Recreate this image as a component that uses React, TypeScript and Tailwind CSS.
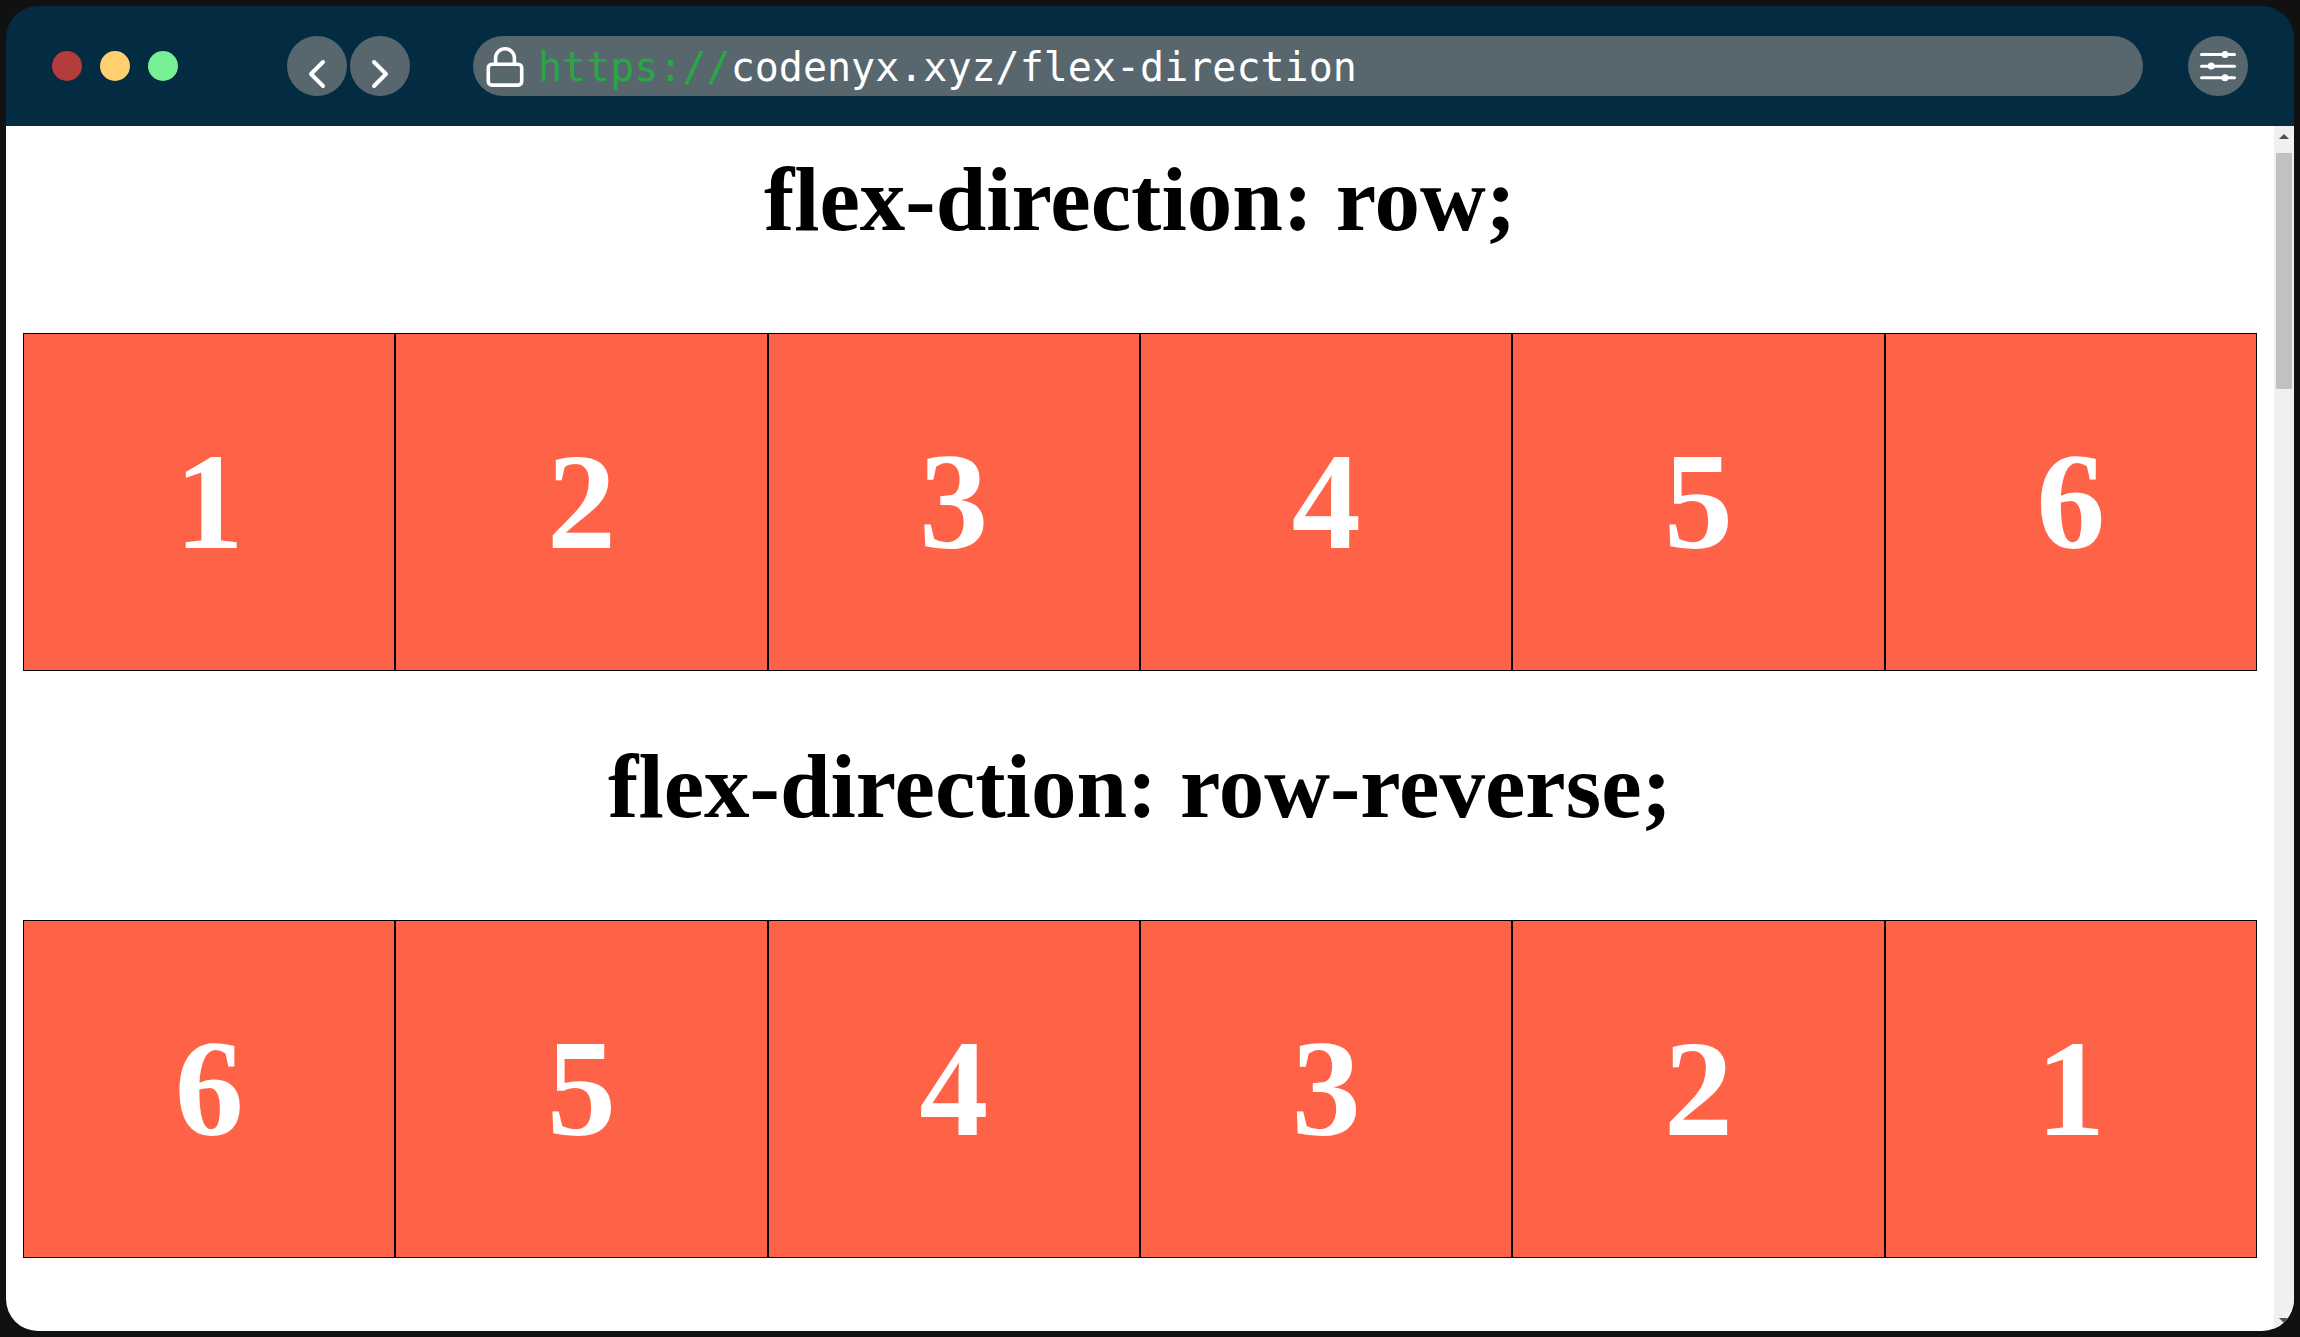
import React from "react";

function Chevron({ points }: { points: string }) {
  return (
    <svg viewBox="0 0 60 60" className="size-full" fill="none" stroke="#fff" strokeWidth="4" strokeLinecap="round" strokeLinejoin="round" aria-hidden="true">
      <polyline points={points} />
    </svg>
  );
}

function LockIcon() {
  return (
    <svg viewBox="0 0 38 42" className="h-[42px] w-[38px] shrink-0" fill="none" stroke="#fff" strokeWidth="3.6" aria-hidden="true">
      <rect x="2.3" y="18.3" width="33.4" height="20.8" rx="3.5" />
      <path d="M9.6 18V11.8a9.4 9 0 0 1 18.8 0v6" />
    </svg>
  );
}

function SlidersIcon() {
  return (
    <svg viewBox="0 0 60 60" className="size-full" fill="#fff" aria-hidden="true">
      <rect x="12" y="17" width="36" height="3" rx="1.5" />
      <rect x="12" y="28.7" width="36" height="3" rx="1.5" />
      <rect x="12" y="40.2" width="36" height="3" rx="1.5" />
      <circle cx="37" cy="18.4" r="3.5" />
      <circle cx="23.2" cy="30" r="3.5" />
      <circle cx="37" cy="41.7" r="3.5" />
    </svg>
  );
}

function Toolbar() {
  return (
    <header className="flex h-[120px] shrink-0 items-center bg-[#032b41] px-[46px]">
      <div className="flex gap-[18px]">
        <button aria-label="Close" className="size-[30px] rounded-full bg-[#b53c3c]" />
        <button aria-label="Minimize" className="size-[30px] rounded-full bg-[#ffcf70]" />
        <button aria-label="Maximize" className="size-[30px] rounded-full bg-[#77ef93]" />
      </div>
      <nav className="ml-[109px] flex gap-[3px]">
        <button aria-label="Back" className="size-[60px] rounded-full bg-[#58666e]">
          <Chevron points="36,26 24,38 36,50" />
        </button>
        <button aria-label="Forward" className="size-[60px] rounded-full bg-[#58666e]">
          <Chevron points="24,26 36,38 24,50" />
        </button>
      </nav>
      <label className="ml-[63px] flex h-[60px] min-w-0 flex-1 items-center rounded-full bg-[#58666e] pt-0.5 pl-[13px] pr-8 font-['DejaVu_Sans_Mono',monospace] text-[40px] leading-[60px]">
        <LockIcon />
        <span className="ml-[14px] text-[#28a745]">https://</span>
        <input aria-label="Address" defaultValue="codenyx.xyz/flex-direction" className="h-[60px] min-w-0 flex-1 bg-transparent text-white outline-none" />
      </label>
      <button aria-label="Settings" className="ml-[45px] size-[60px] shrink-0 rounded-full bg-[#58666e]">
        <SlidersIcon />
      </button>
    </header>
  );
}

function Demo({ value, items, direction }: { value: string; items: number[]; direction: string }) {
  return (
    <section>
      <h2 className="mb-[81px] text-center text-[91px] leading-[104px] font-bold text-black">flex-direction: {value};</h2>
      <div className={`flex ${direction}`}>
        {items.map((n) => (
          <div key={n} className="flex h-[338px] flex-1 items-center justify-center border border-black bg-[#ff6347] text-[138px] leading-none font-bold text-white">
            {n}
          </div>
        ))}
      </div>
    </section>
  );
}

function Scrollbar() {
  return (
    <div className="flex w-5 shrink-0 flex-col items-center bg-[#f0f0f0] pt-2 pb-2" aria-hidden="true">
      <svg viewBox="0 0 10 5" className="h-[5px] w-[10px]" fill="#505050"><path d="M0 5L5 0l5 5z" /></svg>
      <div className="mt-[14px] h-[236px] w-4 bg-[#c1c1c1]" />
      <svg viewBox="0 0 10 5" className="mt-auto h-[5px] w-[10px]" fill="#505050"><path d="M0 0l5 5 5-5z" /></svg>
    </div>
  );
}

const items = [1, 2, 3, 4, 5, 6];

export default function App() {
  return (
    <div className="flex min-h-screen bg-[#111] p-[6px]">
      <div className="flex min-w-0 flex-1 flex-col overflow-hidden rounded-[32px]">
        <Toolbar />
        <div className="flex flex-1 bg-white">
          <main className="flex min-w-0 flex-1 flex-col gap-16 px-[17px] pt-[22px] font-['Liberation_Serif',serif]">
            <Demo value="row" items={items} direction="flex-row" />
            <Demo value="row-reverse" items={items} direction="flex-row-reverse" />
          </main>
          <Scrollbar />
        </div>
      </div>
    </div>
  );
}
